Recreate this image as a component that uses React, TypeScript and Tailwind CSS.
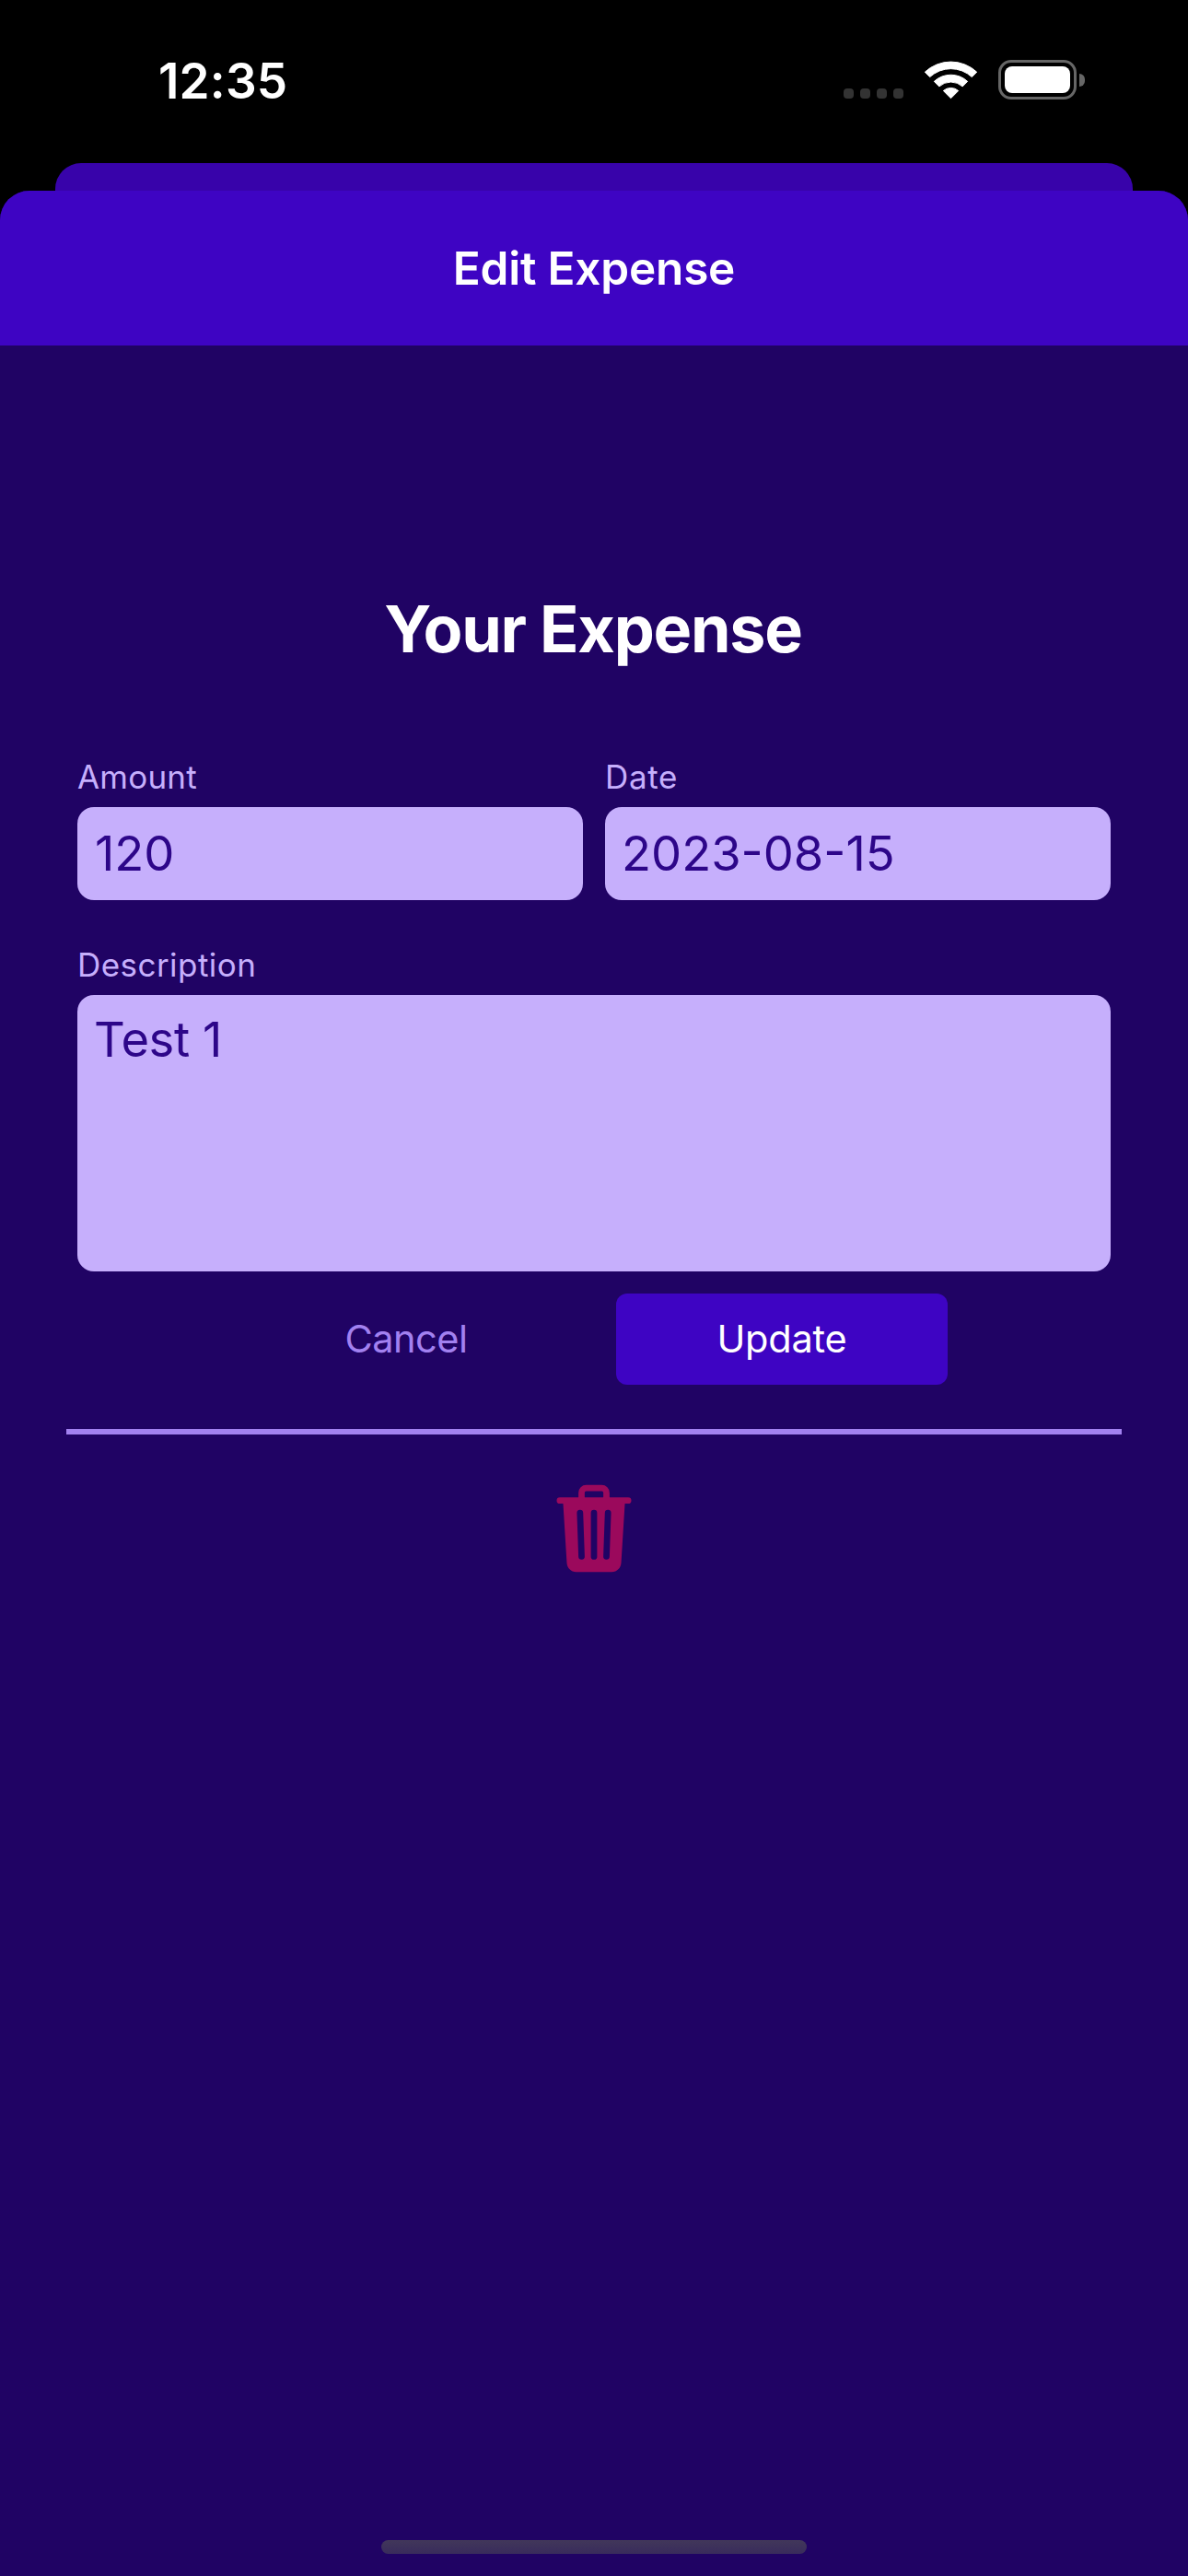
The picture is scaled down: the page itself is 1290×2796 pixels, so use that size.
import type { ReactNode } from 'react'
import { IoTrash } from 'react-icons/io5'

function WifiIcon() {
  return (
    <svg width="60" height="44" viewBox="0 0 60 44" className="ml-[22px]" fill="#fff" stroke="#fff" strokeWidth="1" strokeLinejoin="round">
      <path d="M1.3 13.2 A41.3 41.3 0 0 1 57.7 13.2 L52.3 18.6 A33.5 33.5 0 0 0 6.7 18.6 Z" />
      <path d="M11.3 23.4 A26.7 26.7 0 0 1 47.7 23.4 L42.2 28.9 A19 19 0 0 0 16.8 28.9 Z" />
      <path d="M21.3 33.5 A12.4 12.4 0 0 1 37.7 33.5 L29.5 41.7 Z" />
    </svg>
  )
}

function Battery() {
  return (
    <div className="ml-[21px] flex items-center gap-[3px]">
      <div className="h-[43px] w-[85px] rounded-[14px] border-3 border-[#666] p-1">
        <div className="h-full w-full rounded-[8px] bg-white" />
      </div>
      <div className="h-[14px] w-[6px] rounded-r-full bg-[#666]" />
    </div>
  )
}

function StatusBar() {
  return (
    <div className="flex h-[177px] items-start justify-between pr-[112px] pl-[172px]">
      <div className="mt-14 text-[53px] leading-[64px] font-semibold tracking-[0.2px] text-white">12:35</div>
      <div className="mt-[65px] flex items-start">
        <div className="mt-[31px] flex gap-[7px]">
          <span className="size-[11px] rounded-[4px] bg-[#333]" />
          <span className="size-[11px] rounded-[4px] bg-[#333]" />
          <span className="size-[11px] rounded-[4px] bg-[#333]" />
          <span className="size-[11px] rounded-[4px] bg-[#333]" />
        </div>
        <WifiIcon />
        <Battery />
      </div>
    </div>
  )
}

function Label({ children }: { children: ReactNode }) {
  return <div className="mb-3 text-[35px] leading-[42px] text-[#c6affc]">{children}</div>
}

export default function App() {
  return (
    <div className="flex h-[2796px] w-[1290px] flex-col overflow-hidden bg-black font-['Inter',sans-serif]">
      <StatusBar />
      <div className="mx-[60px] h-[30px] rounded-t-[28px] bg-[#3803aa]" />
      <div className="flex flex-1 flex-col rounded-t-[32px] bg-[#200364]">
        <header className="h-[168px] rounded-t-[32px] bg-[#3e04c3] pt-[54px] text-center text-[49.5px] leading-[60px] font-semibold tracking-[-0.2px] text-white">
          Edit Expense
        </header>
        <main className="flex flex-1 flex-col px-[72px] pt-[266px]">
          <h1 className="mb-[97px] pr-[2px] text-center text-[70px] leading-[84px] font-bold tracking-[-1.25px] text-white">Your Expense</h1>
          <div className="px-3">
            <div className="grid grid-cols-2 gap-6">
              <div>
                <Label><span className="tracking-[0.2px]">Amount</span></Label>
                <div className="h-[101px] rounded-[18px] bg-[#c6affc] pl-[19px] text-[52.5px] leading-[101px] text-[#2d0689]">120</div>
              </div>
              <div>
                <Label><span className="tracking-[0.7px]">Date</span></Label>
                <div className="h-[101px] rounded-[18px] bg-[#c6affc] pl-[18px] text-[52.5px] leading-[101px] text-[#2d0689]">2023-08-15</div>
              </div>
            </div>
            <div className="mt-[49px]">
              <Label><span className="tracking-[0.45px]">Description</span></Label>
              <div className="h-[300px] rounded-[18px] bg-[#c6affc] px-[18px] pt-4 text-[52.5px] leading-[64px] tracking-[-0.4px] text-[#2d0689]">Test 1</div>
            </div>
          </div>
          <div className="mt-6 flex justify-center gap-12 text-[41.5px] leading-[99px]">
            <button className="h-[99px] w-[360px] tracking-[-0.5px] text-[#a281f0]">Cancel</button>
            <button className="h-[99px] w-[360px] rounded-[12px] bg-[#3e04c3] tracking-[-0.2px] text-white">Update</button>
          </div>
          <div className="mt-12 flex justify-center border-t-6 border-[#a281f0] pt-12">
            <IoTrash size={108} color="#9b095c" />
          </div>
        </main>
        <div className="mx-auto mb-6 h-[15px] w-[462px] rounded-full bg-linear-to-b from-[#41375a] to-[#392b5c]" />
      </div>
    </div>
  )
}
